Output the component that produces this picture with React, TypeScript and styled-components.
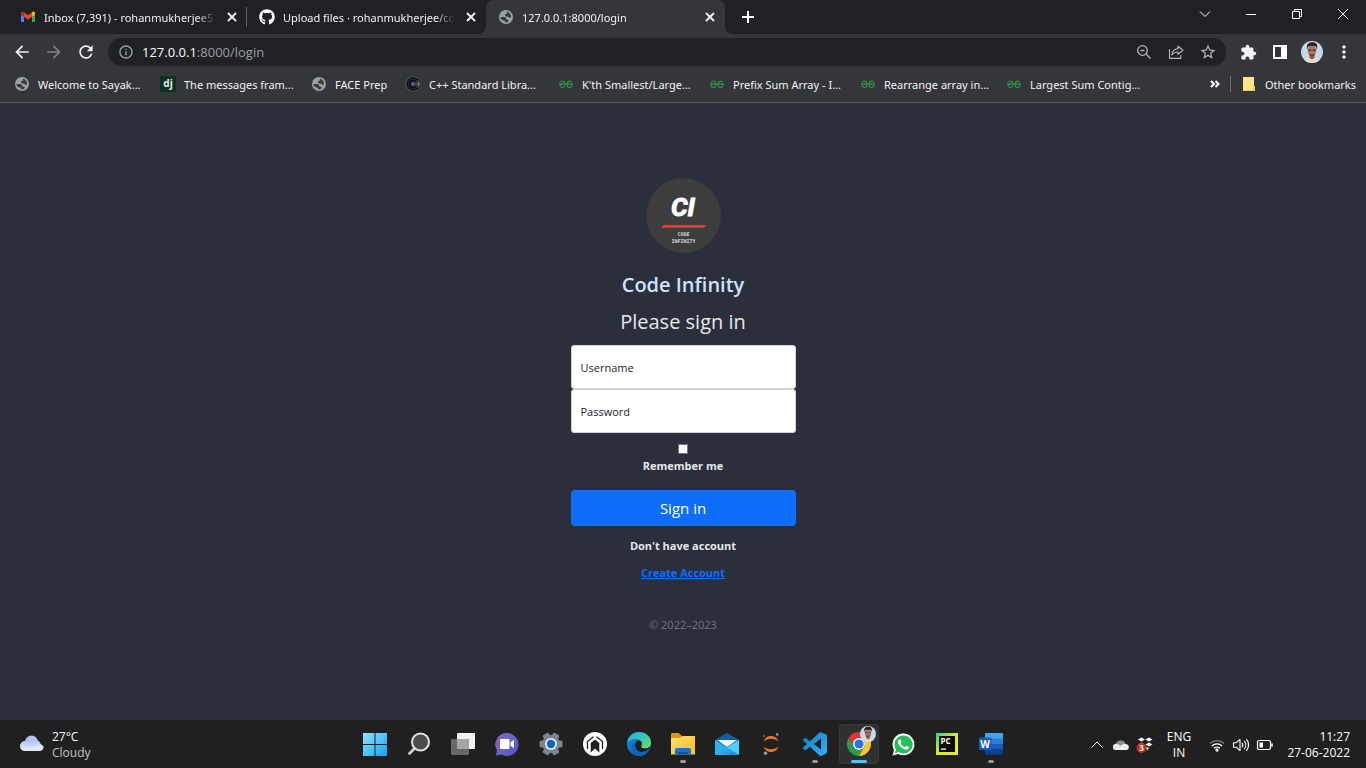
import React from "react";
import styled, { createGlobalStyle, css } from "styled-components";
import { MdArrowBack, MdArrowForward, MdExtension, MdInfoOutline, MdMoreVert, MdPublic, MdRefresh, MdStarOutline } from "react-icons/md";
import { FaGithub, FaWhatsapp } from "react-icons/fa";
import { SiGeeksforgeeks } from "react-icons/si";

const GlobalStyle = createGlobalStyle`
  *, *::before, *::after { box-sizing: border-box; }
  body {
    margin: 0;
    background: #2b2e3b;
    font-family: "Open Sans", "Noto Sans", sans-serif;
    font-size: 12px;
  }
  button { font: inherit; color: inherit; border: 0; padding: 0; background: none; }
  svg { display: block; flex: none; }
`;

const Page = styled.div`
  display: flex;
  flex-direction: column;
  min-height: 100vh;
`;

/* ---------- browser chrome ---------- */

const TabStrip = styled.header`
  display: flex;
  height: 34px;
  padding-left: 8px;
  background: #202124;
  color: #f1f3f4;
  font-family: "Noto Sans", sans-serif;
  font-size: 11px;
`;

const Tab = styled.div<{ $active?: boolean; $divider?: boolean }>`
  position: relative;
  display: flex;
  align-items: center;
  flex: 0 1 239px;
  min-width: 0;
  gap: 8px;
  padding: 0 7px 0 12px;
  ${(p) =>
    p.$divider &&
    css`
      &::after {
        content: "";
        position: absolute;
        right: 0;
        top: 7px;
        width: 1px;
        height: 20px;
        background: #5f6368;
      }
    `}
  ${(p) =>
    p.$active &&
    css`
      background: #35363a;
      border-radius: 8px 8px 0 0;
      &::before,
      &::after {
        content: "";
        position: absolute;
        bottom: 0;
        width: 8px;
        height: 8px;
      }
      &::before {
        left: -8px;
        background: radial-gradient(circle at 0 0, #202124 8px, #35363a 8px);
      }
      &::after {
        right: -8px;
        background: radial-gradient(circle at 100% 0, #202124 8px, #35363a 8px);
      }
    `}
`;

const TabTitle = styled.span`
  flex: 1;
  min-width: 0;
  overflow: hidden;
  white-space: nowrap;
  mask-image: linear-gradient(to right, #000 calc(100% - 20px), transparent);
`;

const IconButton = styled.button<{ $w?: number; $h?: number }>`
  display: flex;
  align-items: center;
  justify-content: center;
  flex: none;
  width: ${(p) => p.$w ?? 32}px;
  height: ${(p) => p.$h ?? 28}px;
`;

const Spacer = styled.div`
  flex: 1;
`;

const Toolbar = styled.nav`
  display: flex;
  align-items: center;
  height: 32px;
  padding: 4px 6px 0;
  background: #35363a;
  color: #f1f3f4;
`;

const AddressBar = styled.div`
  display: flex;
  align-items: center;
  flex: 1;
  min-width: 0;
  height: 28px;
  margin: 0 6px;
  padding: 0 2px 0 10px;
  border-radius: 14px;
  background: #202124;
  color: #9aa0a6;
  font-size: 13px;
`;

const Address = styled.span`
  flex: 1;
  padding-left: 8px;
  b { font-weight: 400; color: #fff; }
`;

const BookmarkBar = styled.nav`
  display: flex;
  align-items: center;
  height: 37px;
  padding: 0 10px 0 14px;
  border-bottom: 1px solid #5a5b5e;
  background: #35363a;
  color: #f1f3f4;
  font-family: "Noto Sans", sans-serif;
  font-size: 11px;
`;

const BookmarkList = styled.div`
  display: grid;
  grid-template-columns: 146px 151px 94px 153px 151px 151px 146px auto;
  flex: 1;
`;

const Bookmark = styled.a`
  display: flex;
  align-items: center;
  gap: 8px;
  color: inherit;
  text-decoration: none;
  white-space: nowrap;
`;

const BarDivider = styled.span`
  width: 1px;
  height: 16px;
  margin: 0 10px 0 4px;
  background: #6b6d71;
`;

/* ---------- sign-in page ---------- */

const Main = styled.main`
  display: flex;
  flex-direction: column;
  align-items: center;
  flex: 1;
  padding: 75px 16px;
  background: #2b2e3b;
  color: #e6e8ea;
`;

const Form = styled.form`
  display: flex;
  flex-direction: column;
  align-items: center;
  width: 100%;
  max-width: 225px;
  font-size: 11px;
  line-height: 18px;
`;

const Brand = styled.h1`
  margin: 18px 0 9px;
  font-size: 20px;
  font-weight: 600;
  line-height: 28px;
  color: #cfe2ff;
`;

const Heading = styled.h2`
  margin: 0 0 9px;
  font-size: 20px;
  font-weight: 400;
  line-height: 28px;
`;

const Field = styled.div`
  display: grid;
  align-items: center;
  width: 100%;
  label, input { grid-area: 1 / 1; }
  label {
    padding: 2px 0 0 10px;
    color: #212529;
    pointer-events: none;
    z-index: 1;
  }
  input {
    width: 100%;
    height: 44px;
    padding: 0 9px;
    border: 1px solid #ced4da;
    border-radius: 3px;
    background: #fff;
    font: inherit;
  }
`;

const Remember = styled.div`
  display: flex;
  flex-direction: column;
  align-items: center;
  gap: 3px;
  margin: 11px 0 15px;
  font-weight: 700;
  input {
    appearance: none;
    width: 10px;
    height: 10px;
    margin: 0;
    border: 1px solid #767676;
    background: #fff;
  }
`;

const Submit = styled.button`
  width: 100%;
  height: 36px;
  border-radius: 4px;
  background: #0d6efd;
  color: #fff;
  font-size: 15px;
`;

const Prompt = styled.p`
  margin: 11px 0 9px;
  font-weight: 700;
`;

const CreateLink = styled.a`
  font-weight: 700;
  color: #0d6efd;
`;

const Copyright = styled.p`
  margin: 34px 0 0;
  font-family: "Noto Sans", sans-serif;
  color: #6c757d;
`;

/* ---------- taskbar ---------- */

const Taskbar = styled.footer`
  display: grid;
  grid-template-columns: 1fr auto 1fr;
  align-items: center;
  height: 48px;
  background: #202020;
  color: #fff;
`;

const Weather = styled.div`
  display: flex;
  align-items: center;
  gap: 8px;
  padding: 2px 0 0 20px;
  line-height: 16px;
  small { display: block; font-size: 12px; color: #c5c5c5; }
`;

const Apps = styled.div`
  display: flex;
`;

const AppButton = styled.button<{ $state?: "open" | "active" }>`
  position: relative;
  display: flex;
  align-items: center;
  justify-content: center;
  width: 40px;
  height: 40px;
  margin: 0 2px;
  border-radius: 4px;
  ${(p) => p.$state === "active" && css`background: #303030; box-shadow: inset 0 0 0 1px #383838;`}
  ${(p) =>
    p.$state &&
    css`
      &::after {
        content: "";
        position: absolute;
        bottom: 1px;
        left: 50%;
        width: ${p.$state === "active" ? 16 : 6}px;
        height: 3px;
        border-radius: 2px;
        transform: translateX(-50%);
        background: ${p.$state === "active" ? "#4cc2ff" : "#9a9a9a"};
      }
    `}
`;

const Tray = styled.div`
  display: flex;
  align-items: center;
  justify-content: flex-end;
  padding: 2px 16px 0 0;
  line-height: 16px;
`;

const Language = styled.div`
  width: 44px;
  margin-right: 4px;
  text-align: center;
`;

const Clock = styled.div`
  width: 73px;
  text-align: right;
  white-space: nowrap;
`;

/* ---------- icons ---------- */

const Gmail = () => (
  <svg width="16" height="16" viewBox="0 0 16 16">
    <path d="M1 4v8.2c0 .5.4.8.8.8H4V6.500z" fill="#4285f4" />
    <path d="M12 13h2.200c.5 0 .8-.4.8-.8V4l-3 2.500z" fill="#34a853" />
    <path d="M4 7.800V3.300L8 6.300l4-3v4.500L8 10.800z" fill="#ea4335" />
    <path d="M1 4.300v1.300l3 2.200V3.300l-.7-.5C2.300 2 1 2.800 1 4.300z" fill="#c5221f" />
    <path d="M15 4.300v1.300l-3 2.200V3.300l.7-.5c1-.8 2.300 0 2.300 1.500z" fill="#fbbc04" />
  </svg>
);

const Cross = ({ size = 8, stroke = 2 }: { size?: number; stroke?: number }) => (
  <svg width={size} height={size} viewBox="0 0 10 10">
    <path d="M1 1l8 8M9 1l-8 8" stroke="#f1f3f4" strokeWidth={stroke} />
  </svg>
);

const Globe = () => (
  <svg width="16" height="16" viewBox="0 0 16 16">
    <circle cx="8" cy="8" r="7" fill="#9aa0a6" />
    <path d="M8.500 2.500C9.500 2.500 13 4 13 7.500c0 1-1 1.700-1.800 1.200-.8-.4-.8-1.200-2-1.200C7.500 7.500 7 6.800 7 6s.8-1.200 1.700-1.200c.8 0 .8-.8.3-1.300zM2.500 8h3.700c1.300 0 2 .8 2 1.700 0 .8.600 1 1.600 1 1.200 0 1 1.300.2 2-1 .8-2.500.8-3 .6V11.800C4.500 11.800 2.500 10.500 2.500 8z" fill="#3a3b3f" />
  </svg>
);

const Django = () => (
  <svg width="16" height="16" viewBox="0 0 16 16">
    <rect width="16" height="16" fill="#0c3226" />
    <text x="8" y="11" textAnchor="middle" fontFamily="Open Sans" fontWeight="700" fontSize="10" fill="#e8efe9">dj</text>
  </svg>
);

const CppRef = () => (
  <svg width="16" height="16" viewBox="0 0 16 16" fill="none">
    <path d="M13 12.800A7 7 0 1 1 13 3.200" stroke="#596080" strokeWidth="1" />
    <path d="M12.500 12A6 6 0 1 1 12.500 4" stroke="#0d0f1a" strokeWidth="1.500" />
    <path d="M10.500 5.500A3.500 3.500 0 1 0 10.500 10.500" stroke="#0d0f1a" strokeWidth="2" />
    <path d="M6 8h4M8 6v4M11.500 8h4M13.500 6v4" stroke="#717896" strokeWidth="1" />
  </svg>
);

const Geeks = () => (
  <svg width="16" height="16" viewBox="0 0 16 16" fill="none" stroke="#2f8d46" strokeWidth="1.300">
    <path d="M1 8h14M2 6.200C2.800 4.700 5 4.700 6.200 6c1 1.100 1 4 0 5C5 12 2.200 11.800 1.800 8.500" />
    <path d="M14 6.200c-.8-1.500-3-1.500-4.200-.2-1 1.100-1 4 0 5 1.200 1 4 .8 4.400-2.500" />
  </svg>
);

const Folder = () => (
  <svg width="16" height="16" viewBox="0 0 16 16">
    <path d="M2 1h11v9h1v5H3.500L2 14z" fill="#ffe48b" />
    <path d="M2 14h9.500v-3.500H14V15H2z" fill="#f2cd57" />
    <path d="M2 1h9.500v12.500H2z" fill="#ffe48b" />
  </svg>
);

const ZoomOut = () => (
  <svg width="16" height="16" viewBox="0 0 16 16" fill="none" stroke="#b5b8bc" strokeWidth="1.300">
    <circle cx="6.500" cy="6.500" r="4.800" />
    <path d="M10 10l4.500 4.500M4.500 6.500h4" />
  </svg>
);

const Share = () => (
  <svg width="16" height="16" viewBox="0 0 16 16" fill="none" stroke="#b5b8bc" strokeWidth="1.100">
    <path d="M1.500 5v9.400h11.300V11" />
    <path d="M10 2.300l5 4-5 4V8C7 8 5 9 3.800 11.300 4 7.500 6.300 5 10 4.600z" />
  </svg>
);

const SidePanel = () => (
  <svg width="14" height="14" viewBox="0 0 14 14">
    <path fillRule="evenodd" d="M0 0h14v14H0zM2 2v10h6V2z" fill="#fff" />
  </svg>
);

const Portrait = ({ size }: { size: number }) => (
  <svg width={size} height={size} viewBox="0 0 22 22">
    <clipPath id={`face${size}`}><circle cx="11" cy="11" r="11" /></clipPath>
    <g clipPath={`url(#face${size})`}>
      <rect width="22" height="22" fill="#c3d7ee" />
      <path d="M2 22c0-4 3-5.500 6-6h6c3 .5 6 2 6 6z" fill="#e6d9d6" />
      <path d="M8.500 13h5v4L11 18.500 8.500 17z" fill="#91614c" />
      <ellipse cx="11" cy="9.500" rx="4.300" ry="5.800" fill="#a87660" />
      <path d="M6 8.500C5 3.500 7.500 1.200 11.500 1.200S17 4 16 8.500l-1-3c-2-1-6-1-8 0z" fill="#241d1d" />
      <path d="M7 8.500h3.400v1.600H7.500zM11.600 8.500H15l-.5 1.600h-2.900z" fill="#4c352f" />
      <path d="M8 12.500c.5 2.700 1.500 3.200 3 3.200s2.500-.5 3-3.200l-1.200.7H9.200z" fill="#6b483b" />
    </g>
  </svg>
);

const Line = ({ d, size = 12, w = 1 }: { d: string; size?: number; w?: number }) => (
  <svg width={size} height={size} viewBox={`0 0 ${size} ${size}`} fill="none" stroke="#fff" strokeWidth={w}>
    <path d={d} />
  </svg>
);

const Logo = () => (
  <svg width="75" height="75" viewBox="0 0 75 75" role="img" aria-label="Code Infinity logo">
    <circle cx="37.500" cy="37.500" r="37.500" fill="#3d3d3d" />
    <text x="37" y="38" textAnchor="middle" fontFamily="Roboto, sans-serif" fontWeight="700" fontStyle="italic" fontSize="26" fill="#fff" stroke="#fff" strokeWidth="1">CI</text>
    <path d="M17.500 47h43l-3 2.800H15z" fill="#f5333a" />
    <text x="37.500" y="58" textAnchor="middle" fontFamily="DejaVu Sans Mono" fontWeight="700" fontSize="5" fill="#d8d8d8">CODE</text>
    <text x="37.500" y="65" textAnchor="middle" fontFamily="DejaVu Sans Mono" fontWeight="700" fontSize="5" fill="#d8d8d8">INFINITY</text>
  </svg>
);

const Art = ({ children }: { children: React.ReactNode }) => (
  <svg width="24" height="24" viewBox="0 0 24 24">{children}</svg>
);

const Grad = ({ id, a, b, c }: { id: string; a: string; b: string; c?: string }) => (
  <linearGradient id={id} x1="0" y1="0" x2="1" y2="1">
    <stop offset="0" stopColor={a} />
    {c && <stop offset="0.500" stopColor={c} />}
    <stop offset="1" stopColor={b} />
  </linearGradient>
);

const Cloudy = () => (
  <Art>
    <linearGradient id="cl1" x1="0" y1="0" x2="0" y2="1"><stop stopColor="#a9c3f5" /><stop offset="1" stopColor="#e8f1fb" /></linearGradient>
    <circle cx="11.500" cy="9" r="6.500" fill="#adc6f3" />
    <path d="M5 18a5 5 0 0 1 0-10c2 0 3.500.7 4.500 2 1-1.500 3-3 5.500-3 3 0 5 1.500 5.300 3.500A4 4 0 0 1 19.500 18z" fill="url(#cl1)" />
    <path d="M5 18a5 5 0 0 1-4.500-3c4-2 8-2 11 .2 3-3.500 8-4.200 12-2.200.7 2.500-1.200 5-4 5z" fill="#dce9f8" />
  </Art>
);

const Start = () => (
  <Art>
    <Grad id="st" a="#8fe3ff" b="#1a9cf2" c="#4fc6fa" />
    <path d="M0 1h11.500v11H0zM12.500 1H24v11H12.500zM0 13h11.500v11H0zM12.500 13H24v11H12.500z" fill="url(#st)" />
  </Art>
);

const Search = () => (
  <Art>
    <path d="M2.500 21.500l6-6" stroke="#cfd2d4" strokeWidth="2.800" strokeLinecap="round" />
    <circle cx="13.500" cy="10" r="8.500" fill="#4a4c4e" stroke="#dfe2e4" strokeWidth="2" />
  </Art>
);

const TaskView = () => (
  <Art>
    <rect x="6" y="1" width="18" height="16" rx="1" fill="#f2f2f2" />
    <rect x="0" y="7" width="18" height="16" rx="1" fill="#686868" />
    <rect x="6" y="7" width="12" height="10" fill="#a5a5a5" />
  </Art>
);

const Chat = () => (
  <Art>
    <Grad id="ch" a="#8a63b5" b="#4a52cf" c="#6b62c8" />
    <path d="M12 1a11.500 11.500 0 1 1-5.500 21.600L1 23.500l1-5A11.500 11.500 0 0 1 12 1z" fill="url(#ch)" />
    <rect x="5" y="7" width="9.500" height="10" rx="1" fill="#fff" />
    <path d="M15.500 10.500L19 7.800v8.400l-3.500-2.700z" fill="#fff" />
  </Art>
);

const Settings = () => (
  <Art>
    <g fill="#7a858e">
      {[0, 60, 120].map((r) => (
        <rect key={r} x="8.500" y="0.500" width="7" height="23" rx="1.500" transform={`rotate(${r + 30} 12 12)`} />
      ))}
      <circle cx="12" cy="12" r="9" />
    </g>
    <circle cx="12" cy="12" r="6" fill="#e7ebee" />
    <circle cx="12" cy="12" r="4.200" fill="#0c65b8" />
  </Art>
);

const Nest = () => (
  <Art>
    <circle cx="12" cy="12" r="12" fill="#fff" />
    <path d="M7.700 20.500V11L12 7.500l4.300 3.500v9.500L12 16.500z" fill="#202020" />
    <path d="M4.500 17V9.500L12 3.500l7.500 6V17" fill="none" stroke="#202020" strokeWidth="1.300" />
    <path d="M12 2.500v4" stroke="#fff" strokeWidth="3" />
  </Art>
);

const Edge = () => (
  <Art>
    <Grad id="ed1" a="#27a9e6" b="#7be24a" c="#35c6bd" />
    <Grad id="ed2" a="#1893dd" b="#0c4a9e" />
    <circle cx="12" cy="12" r="12" fill="url(#ed2)" />
    <path d="M.2 10.500C1.200 4.500 6 0 12 0c7 0 12 5 12 10.500 0 4-3 6-6 6-2.500 0-4-.9-4-1.700 0-.8 1-1 1-3 0-2.500-2.500-4.800-6-4.800-4 0-7.500 1.500-8.800 3.500z" fill="url(#ed1)" />
    <path d="M8 13c0-3 2-4.800 4.500-4.300 1.800.5 2.600 1.800 2.500 3.300-.1 1.600-1 2-1 2.800 0 .8 1.500 1.700 4 1.700 1.500 0 3-.5 4-1.300l.7.600C21 19 17 20 14.500 20 10.500 20 8 16.500 8 13z" fill="#202020" />
    <path d="M8 13c0 4 2.500 7 6.500 7 3 0 6-1.200 8-3.500C20.500 21.500 16.500 24 12.500 24 7 23 3.500 18 5 13c1-2.500 3.500-4 6.500-4.400C9.500 9 8 10.500 8 13z" fill="#1264ba" />
  </Art>
);

const Explorer = () => (
  <Art>
    <Grad id="ex" a="#ffdf6b" b="#fdbd2c" />
    <path d="M0 2.500C0 1.700.6 1 1.500 1h6L11 4v4H0z" fill="#d99a10" />
    <path d="M0 6h9l2.500-2H24v18.500H0z" fill="url(#ex)" />
    <path d="M4 22.500V18a2 2 0 0 1 2-2h12a2 2 0 0 1 2 2v4.500z" fill="#1476c6" />
    <path d="M7 20h10v2.500H7z" fill="#0d5596" />
  </Art>
);

const Mail = () => (
  <Art>
    <Grad id="ml" a="#35c4f5" b="#1687dc" />
    <path d="M0 8L12 1l12 7v6H0z" fill="#0b5fae" />
    <path d="M0 8l12 7.500L24 8v15H0z" fill="#2ab6f0" />
    <path d="M24 8v15L12 15.500z" fill="#4bd0fb" />
    <path d="M0 23l12-7.500L24 23z" fill="url(#ml)" />
    <path d="M2 8h20l-10 7z" fill="#f4f5f6" />
  </Art>
);

const Jupyter = () => (
  <Art>
    <path d="M4.500 9.500C6 5.500 9 4 12 4s6 1.500 7.500 5.500C17.500 7.700 15 6.800 12 6.800S6.500 7.700 4.500 9.500z" fill="#f37626" />
    <path d="M4.500 14.500C6 18.500 9 20 12 20s6-1.500 7.500-5.500c-2 1.800-4.500 2.700-7.500 2.700s-5.500-.9-7.500-2.700z" fill="#f37626" />
    <circle cx="18.200" cy="2.500" r="1.400" fill="#8a8a8a" />
    <circle cx="6.500" cy="21.200" r="1.700" fill="#a0a0a0" />
    <circle cx="5" cy="4" r="1" fill="#6f6f6f" />
  </Art>
);

const Code = () => (
  <Art>
    <Grad id="vs" a="#1478bd" b="#33b3f8" />
    <path fill="url(#vs)" d="M23.150 2.587L18.210.210a1.494 1.494 0 0 0-1.705.290l-9.460 8.630-4.120-3.128a.999.999 0 0 0-1.276.057L.327 7.261A1 1 0 0 0 .326 8.740L3.899 12 .326 15.260a1 1 0 0 0 .001 1.479L1.650 17.940a.999.999 0 0 0 1.276.057l4.120-3.128 9.460 8.630a1.492 1.492 0 0 0 1.704.290l4.942-2.377A1.500 1.500 0 0 0 24 20.060V3.939a1.500 1.500 0 0 0-.850-1.352zm-5.146 14.861L10.826 12l7.178-5.448v10.896z" />
  </Art>
);

const ChromeMark = styled.span`
  position: relative;
  > svg + svg { position: absolute; top: -6px; right: -5px; }
`;

const Chrome = () => (
  <ChromeMark>
    <svg width="24" height="24" viewBox="0 0 24 24">
      <path d="M1.610 6A12 12 0 0 1 22.390 6H12a6 6 0 0 0-5.200 9z" fill="#e2392c" />
      <path d="M1.610 6A12 12 0 0 0 12 24l5.200-9A6 6 0 0 1 6.800 15z" fill="#2b9e49" />
      <path d="M22.390 6A12 12 0 0 1 12 24l5.200-9A6 6 0 0 0 12 6z" fill="#fcc624" />
      <circle cx="12" cy="12" r="6" fill="#fff" />
      <circle cx="12" cy="12" r="4.600" fill="#2a77e8" />
    </svg>
    <Portrait size={16} />
  </ChromeMark>
);

const WhatsMark = styled.span`
  display: grid;
  place-items: center;
  svg { grid-area: 1 / 1; }
`;

const Whats = () => (
  <WhatsMark>
    <svg width="24" height="24" viewBox="0 0 24 24"><circle cx="12" cy="12" r="10.500" fill="#25c05c" /></svg>
    <FaWhatsapp size={25} color="#fff" />
  </WhatsMark>
);

const PyCharm = () => (
  <Art>
    <Grad id="py" a="#21d789" b="#e6f03a" c="#d8ea30" />
    <rect x="1" y="1" width="22" height="22" fill="url(#py)" />
    <rect x="4" y="4" width="16" height="16" fill="#0a0a0a" />
    <text x="5.500" y="12" fontFamily="Open Sans" fontWeight="700" fontSize="8" fill="#fff">PC</text>
    <path d="M6 16.500h5v1.300H6z" fill="#fff" />
  </Art>
);

const Word = () => (
  <Art>
    <path d="M6 2a1 1 0 0 1 1-1h16a1 1 0 0 1 1 1v5H6z" fill="#41a5ee" />
    <path d="M6 6.500h18v5.500H6z" fill="#2b7cd3" />
    <path d="M6 12h18v5H6z" fill="#185abd" />
    <path d="M6 17h18v4.500a1 1 0 0 1-1 1H7a1 1 0 0 1-1-1z" fill="#103f91" />
    <rect x="0" y="5.500" width="12.500" height="12.500" rx="1" fill="#185abd" />
    <text x="6.200" y="15.500" textAnchor="middle" fontFamily="Open Sans" fontWeight="700" fontSize="10" fill="#fff">W</text>
  </Art>
);

const OneDrive = () => (
  <svg width="16" height="16" viewBox="0 0 16 16">
    <path d="M2 8c1-3 3.500-5 6.300-4.500 2.500.3 4 2 4.700 4L8 11z" fill="#8d8d8d" />
    <path d="M3 13a3 3 0 0 1-.5-6c2 0 3.500.7 5 1.700 2-1.500 6-2.400 7.500-.7 1.800 2 .8 5-1.700 5z" fill="#ededed" />
  </svg>
);

const Dropbox = () => (
  <svg width="18" height="18" viewBox="0 0 18 18">
    <path d="M5.500 1.500l3.500 2-3.500 2-3.500-2zM13 1.500l3.500 2-3.500 2-3.500-2zM13 6.500l3.500 2-3.500 2-3.500-2zM5.500 6.500l3.500 2-3.500 2-3.500-2zM10 11l3 1-2 2.500z" fill="#fff" />
    <circle cx="5.500" cy="12" r="5" fill="#c4301a" />
    <text x="5.500" y="15" textAnchor="middle" fontFamily="Open Sans" fontWeight="700" fontSize="8" fill="#fff">3</text>
  </svg>
);

const Wifi = () => (
  <svg width="16" height="16" viewBox="0 0 16 16" fill="none" stroke="#fff" strokeWidth="1.300">
    <path d="M1 6.500a10 10 0 0 1 14 0" stroke="#7a7a7a" />
    <path d="M3 9a7 7 0 0 1 10 0M5 11.300a4.300 4.300 0 0 1 6 0" />
    <circle cx="8" cy="13" r="1" fill="#fff" />
  </svg>
);

const Volume = () => (
  <svg width="18" height="16" viewBox="0 0 18 16" fill="none" stroke="#fff" strokeWidth="1.100">
    <path d="M1.500 5.700h2.800L8 2.500v11l-3.700-3.200H1.500z" strokeLinejoin="round" />
    <path d="M10 5.800a3.500 3.500 0 0 1 0 4.400M12.200 3.900a6.200 6.200 0 0 1 0 8.200M14.400 2.200a9 9 0 0 1 0 11.600" />
  </svg>
);

const Battery = () => (
  <svg width="18" height="16" viewBox="0 0 18 16" fill="none" stroke="#fff" strokeWidth="1.200">
    <rect x="1.500" y="3.500" width="13" height="9" rx="1.800" />
    <path d="M16 6.500v3" strokeWidth="1.600" />
    <path d="M3.500 5.500h3.500v5H3.500z" fill="#fff" stroke="none" />
  </svg>
);

/* ---------- data ---------- */

const bookmarks = [
  { label: "Welcome to Sayak...", icon: <Globe /> },
  { label: "The messages fram...", icon: <Django /> },
  { label: "FACE Prep", icon: <Globe /> },
  { label: "C++ Standard Libra...", icon: <CppRef /> },
  { label: "K'th Smallest/Large...", icon: <Geeks /> },
  { label: "Prefix Sum Array - I...", icon: <Geeks /> },
  { label: "Rearrange array in...", icon: <Geeks /> },
  { label: "Largest Sum Contig...", icon: <Geeks /> },
];

const tabs = [
  { title: "Inbox (7,391) - rohanmukherjee5", icon: <Gmail />, divider: true },
  { title: "Upload files · rohanmukherjee/co", icon: <FaGithub size={16} color="#fff" /> },
  { title: "127.0.0.1:8000/login", icon: <Globe />, active: true },
];

const apps: { name: string; icon: React.ReactNode; state?: "open" | "active" }[] = [
  { name: "Start", icon: <Start /> },
  { name: "Search", icon: <Search /> },
  { name: "Task view", icon: <TaskView /> },
  { name: "Chat", icon: <Chat /> },
  { name: "Settings", icon: <Settings /> },
  { name: "Control center", icon: <Nest /> },
  { name: "Edge", icon: <Edge /> },
  { name: "File Explorer", icon: <Explorer />, state: "open" },
  { name: "Mail", icon: <Mail /> },
  { name: "Jupyter", icon: <Jupyter /> },
  { name: "Visual Studio Code", icon: <Code />, state: "open" },
  { name: "Chrome", icon: <Chrome />, state: "active" },
  { name: "WhatsApp", icon: <Whats /> },
  { name: "PyCharm", icon: <PyCharm /> },
  { name: "Word", icon: <Word />, state: "open" },
];

export default function App() {
  return (
    <Page>
      <GlobalStyle />
      <TabStrip>
        {tabs.map((t) => (
          <Tab key={t.title} $active={t.active} $divider={t.divider}>
            {t.icon}
            <TabTitle>{t.title}</TabTitle>
            <IconButton $w={16} $h={16} aria-label="Close tab"><Cross size={10} /></IconButton>
          </Tab>
        ))}
        <IconButton $w={46} $h={34} aria-label="New tab"><Line size={12} w={2} d="M6 0v12M0 6h12" /></IconButton>
        <Spacer />
        <IconButton $w={46} aria-label="Search tabs"><Line d="M1 3.500l5 5 5-5" /></IconButton>
        <IconButton $w={46} aria-label="Minimize"><Line d="M1 6.500h10" /></IconButton>
        <IconButton $w={46} aria-label="Restore"><Line d="M1.500 3.500h7v7h-7zM3.500 3.500v-2h7v7h-2" /></IconButton>
        <IconButton $w={46} aria-label="Close"><Line d="M1 1l10 10M11 1L1 11" /></IconButton>
      </TabStrip>

      <Toolbar>
        <IconButton aria-label="Back"><MdArrowBack size={20} /></IconButton>
        <IconButton aria-label="Forward"><MdArrowForward size={20} color="#818285" /></IconButton>
        <IconButton aria-label="Reload"><MdRefresh size={20} /></IconButton>
        <AddressBar>
          <MdInfoOutline size={16} />
          <Address><b>127.0.0.1</b>:8000/login</Address>
          <IconButton aria-label="Zoom"><ZoomOut /></IconButton>
          <IconButton aria-label="Share"><Share /></IconButton>
          <IconButton aria-label="Bookmark"><MdStarOutline size={18} color="#b5b8bc" /></IconButton>
        </AddressBar>
        <IconButton aria-label="Extensions"><MdExtension size={17} /></IconButton>
        <IconButton aria-label="Side panel"><SidePanel /></IconButton>
        <IconButton aria-label="Profile"><Portrait size={22} /></IconButton>
        <IconButton aria-label="Menu"><MdMoreVert size={20} /></IconButton>
      </Toolbar>

      <BookmarkBar>
        <BookmarkList>
          {bookmarks.map((b) => (
            <Bookmark key={b.label} href="#">{b.icon}{b.label}</Bookmark>
          ))}
        </BookmarkList>
        <IconButton $w={22} aria-label="More bookmarks">
          <Line size={10} w={2} d="M1 2l3 3-3 3M5.500 2l3 3-3 3" />
        </IconButton>
        <BarDivider />
        <Bookmark href="#"><Folder />Other bookmarks</Bookmark>
      </BookmarkBar>

      <Main>
        <Form onSubmit={(e) => e.preventDefault()}>
          <Logo />
          <Brand>Code Infinity</Brand>
          <Heading>Please sign in</Heading>
          <Field>
            <input id="username" type="text" />
            <label htmlFor="username">Username</label>
          </Field>
          <Field>
            <input id="password" type="password" />
            <label htmlFor="password">Password</label>
          </Field>
          <Remember>
            <input id="remember" type="checkbox" />
            <label htmlFor="remember">Remember me</label>
          </Remember>
          <Submit type="submit">Sign in</Submit>
          <Prompt>Don't have account</Prompt>
          <CreateLink href="#">Create Account</CreateLink>
          <Copyright>© 2022–2023</Copyright>
        </Form>
      </Main>

      <Taskbar>
        <Weather>
          <Cloudy />
          <div>27°C<small>Cloudy</small></div>
        </Weather>
        <Apps>
          {apps.map((a) => (
            <AppButton key={a.name} aria-label={a.name} $state={a.state}>{a.icon}</AppButton>
          ))}
        </Apps>
        <Tray>
          <IconButton $w={24} aria-label="Hidden icons"><Line d="M0.500 8.500L6 3l5.500 5.500" w={1} /></IconButton>
          <IconButton $w={24} aria-label="OneDrive"><OneDrive /></IconButton>
          <IconButton $w={24} aria-label="Dropbox"><Dropbox /></IconButton>
          <Language>ENG<br />IN</Language>
          <IconButton $w={24} aria-label="Network"><Wifi /></IconButton>
          <IconButton $w={24} aria-label="Volume"><Volume /></IconButton>
          <IconButton $w={24} aria-label="Battery"><Battery /></IconButton>
          <Clock>11:27<br />27-06-2022</Clock>
        </Tray>
      </Taskbar>
    </Page>
  );
}
